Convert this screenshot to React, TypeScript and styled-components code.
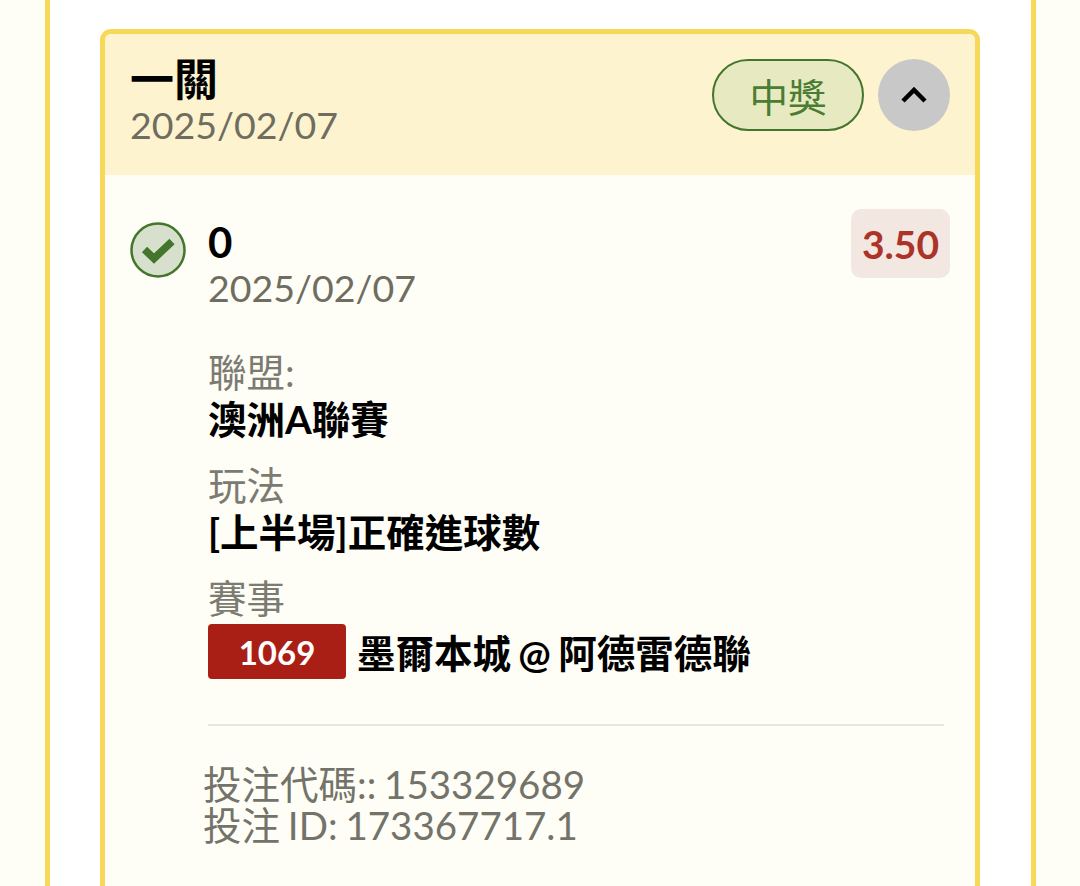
import styled, { createGlobalStyle } from "styled-components";

const GlobalStyle = createGlobalStyle`
  html, body {
    margin: 0;
    padding: 0;
    height: 886px;
    overflow: hidden;
    background: #fefdf6;
    font-family: Lato, "Noto Sans CJK TC", sans-serif;
  }
`;

const Page = styled.div`
  height: 886px;
  overflow: hidden;
  padding: 0 44px 0 45px;
`;

const Panel = styled.div`
  height: 886px;
  box-sizing: border-box;
  background: #fff;
  border-left: 5px solid #f8d859;
  border-right: 5px solid #f8d859;
  padding: 29px 51px 0 50px;
`;

const Card = styled.div`
  height: 900px;
  box-sizing: border-box;
  border: 5px solid #f8d859;
  border-radius: 11px;
  overflow: hidden;
  background: #fefdf6;
`;

const Header = styled.div`
  height: 141px;
  box-sizing: border-box;
  background: #fdf3cf;
  padding: 21px 25px 0 25px;
  display: flex;
  justify-content: space-between;
  align-items: flex-start;
`;

const TitleBlock = styled.div`
  display: flex;
  flex-direction: column;
`;

const Title = styled.div`
  font-size: 44px;
  line-height: 48px;
  font-weight: 700;
  color: #000;
`;

const DateText = styled.div`
  font-size: 37.5px;
  line-height: 43px;
  color: #6f6c60;
`;

const HeaderActions = styled.div`
  display: flex;
  align-items: center;
  gap: 14px;
  margin-top: 4px;
`;

const StatusPill = styled.div`
  width: 152px;
  height: 72px;
  box-sizing: border-box;
  border: 2.5px solid #43752d;
  border-radius: 36px;
  background: #e7e9c0;
  color: #4a7c34;
  font-size: 38.5px;
  display: flex;
  align-items: center;
  justify-content: center;
`;

const Toggle = styled.div`
  width: 72px;
  height: 72px;
  border-radius: 50%;
  background: #c8c8c8;
  display: flex;
  align-items: center;
  justify-content: center;
`;

const Body = styled.div`
  padding: 34px 25px 0 25px;
`;

const BetRow = styled.div`
  display: flex;
  align-items: flex-start;
`;

const CheckIcon = styled.svg`
  width: 56px;
  height: 56px;
  margin: 13px 22px 0 0;
  flex: none;
`;

const BetMain = styled.div`
  flex: 1;
`;

const BetValue = styled.div`
  font-size: 42px;
  line-height: 48px;
  font-weight: 700;
  color: #000;
  margin-top: 9px;
`;

const BetTop = styled.div`
  display: flex;
  justify-content: space-between;
  align-items: flex-start;
`;

const Odds = styled.div`
  width: 99px;
  height: 69px;
  border-radius: 10px;
  background: #f3e7e1;
  color: #ab3328;
  font-size: 39px;
  font-weight: 700;
  display: flex;
  align-items: center;
  justify-content: center;
`;

const Field = styled.div<{ $gap: number }>`
  margin-top: ${({ $gap }) => $gap}px;
`;

const FieldLabel = styled.div`
  font-size: 38.5px;
  line-height: 47px;
  color: #7b7b72;
`;

const FieldValue = styled.div`
  font-size: 38.5px;
  line-height: 47px;
  font-weight: 700;
  color: #000;
`;

const MatchRow = styled.div`
  display: flex;
  align-items: center;
  gap: 11px;
  margin-top: 2px;
`;

const MatchCode = styled.div`
  width: 138px;
  height: 55px;
  border-radius: 4px;
  background: #a91f15;
  color: #fff;
  font-size: 33px;
  font-weight: 700;
  display: flex;
  align-items: center;
  justify-content: center;
`;

const MatchName = styled(FieldValue)`
  margin-top: 4px;
  word-spacing: -2px;
`;

const Divider = styled.div`
  height: 2px;
  background: #e6e6de;
  margin: 45px 6px 0 0;
`;

const Footer = styled.div`
  margin: 38px 0 0 -5px;
  font-size: 38.5px;
  line-height: 41px;
  word-spacing: -2px;
  color: #73736a;
`;

export default function App() {
  return (
    <>
      <GlobalStyle />
      <Page>
        <Panel>
          <Card>
            <Header>
              <TitleBlock>
                <Title>一關</Title>
                <DateText>2025/02/07</DateText>
              </TitleBlock>
              <HeaderActions>
                <StatusPill>中獎</StatusPill>
                <Toggle>
                  <svg width="28" height="20" viewBox="0 0 28 20" fill="none">
                    <path d="M3 16 L14 5 L25 16" stroke="#000" strokeWidth="4.5" />
                  </svg>
                </Toggle>
              </HeaderActions>
            </Header>
            <Body>
              <BetRow>
                <CheckIcon viewBox="0 0 56 56" fill="none">
                  <circle cx="28" cy="28" r="26.5" fill="#d7e0cc" stroke="#43752d" strokeWidth="2.5" />
                  <path d="M14.5 27.5 L24 36.5 L42 19.5" stroke="#43752d" strokeWidth="7.5" />
                </CheckIcon>
                <BetMain>
                  <BetTop>
                    <TitleBlock>
                      <BetValue>0</BetValue>
                      <DateText>2025/02/07</DateText>
                    </TitleBlock>
                    <Odds>3.50</Odds>
                  </BetTop>
                  <Field $gap={40}>
                    <FieldLabel>聯盟:</FieldLabel>
                    <FieldValue>澳洲A聯賽</FieldValue>
                  </Field>
                  <Field $gap={19}>
                    <FieldLabel>玩法</FieldLabel>
                    <FieldValue>[上半場]正確進球數</FieldValue>
                  </Field>
                  <Field $gap={19}>
                    <FieldLabel>賽事</FieldLabel>
                    <MatchRow>
                      <MatchCode>1069</MatchCode>
                      <MatchName>墨爾本城 @ 阿德雷德聯</MatchName>
                    </MatchRow>
                  </Field>
                  <Divider />
                  <Footer>
                    投注代碼:: 153329689
                    <br />
                    投注 ID: 173367717.1
                  </Footer>
                </BetMain>
              </BetRow>
            </Body>
          </Card>
        </Panel>
      </Page>
    </>
  );
}
